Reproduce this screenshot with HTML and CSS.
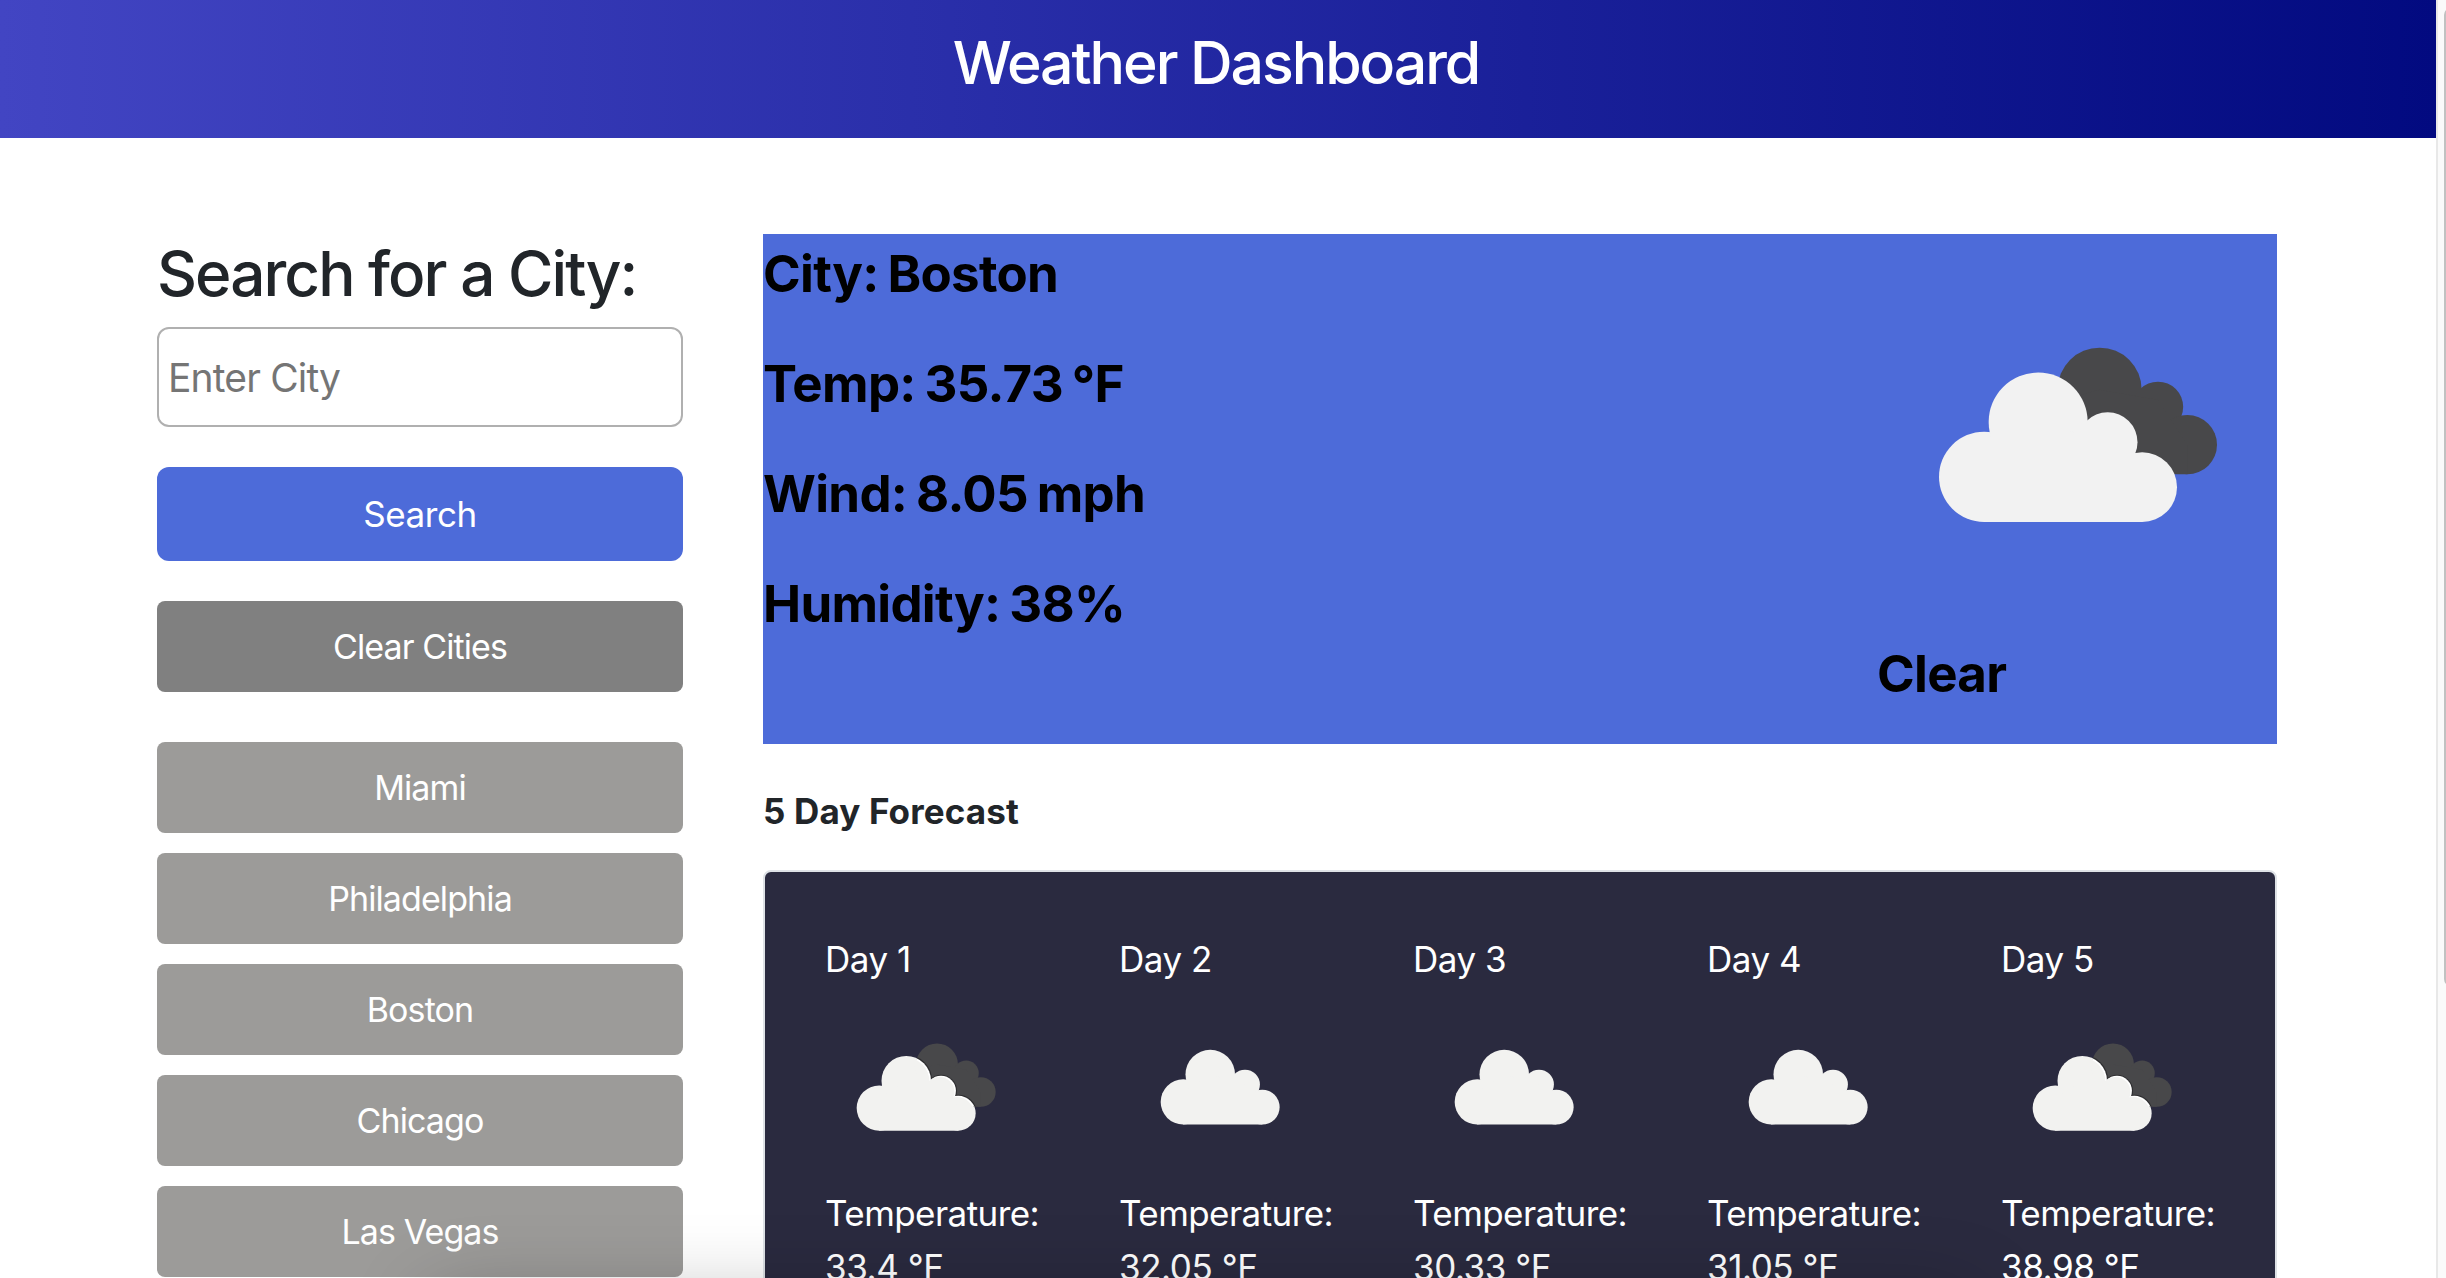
FILE: index.html
```html
<!DOCTYPE html>
<html lang="en">
<head>
<meta charset="utf-8">
<title>Weather Dashboard</title>
<link rel="stylesheet" href="styles.css">
</head>
<body>
<svg class="defs" aria-hidden="true">
  <defs>
    <g id="light-cloud">
      <circle cx="432.5" cy="530.5" r="135.5"/>
      <circle cx="594.5" cy="366" r="148.5"/>
      <circle cx="803" cy="426.500" r="89.500"/>
      <circle cx="906.500" cy="561.500" r="104.500"/>
      <path d="M432 470L595 366L803 426L907 500V666H432z"/>
    </g>
    <g id="dark-cloud">
      <circle cx="779" cy="269" r="126"/>
      <circle cx="954" cy="320.500" r="75.500"/>
      <circle cx="1042" cy="434" r="89"/>
      <path d="M660 300L779 269L954 300L1042 434V523H700z"/>
    </g>
    <clipPath id="dark-clip">
      <circle cx="779" cy="269" r="126"/>
      <circle cx="954" cy="320.500" r="75.500"/>
      <circle cx="1042" cy="434" r="89"/>
      <path d="M660 300L779 269L954 300L1042 434V523H700z"/>
    </clipPath>
    <symbol id="broken-clouds" viewBox="111 -198 1200 1200">
      <use href="#dark-cloud" fill="#48484a"/>
      <use href="#light-cloud" fill="#f2f2f2"/>
    </symbol>
    <symbol id="broken-clouds-small" viewBox="107 -202 1200 1200">
      <use href="#dark-cloud" fill="#48484a"/>
      <use href="#light-cloud" fill="#f2f2f0"/>
      <g clip-path="url(#dark-clip)">
        <use href="#light-cloud" fill="#fff" stroke="#2e2e30" stroke-width="14"/>
        <use href="#light-cloud" fill="#fff"/>
      </g>
      <use href="#light-cloud" fill="#f2f2f0" transform="translate(-9 7)" clip-path="url(#dark-clip)"/>
    </symbol>
    <symbol id="scattered-clouds" viewBox="107 -201 1200 1200">
      <use href="#light-cloud" fill="#f2f2f0" transform="translate(60 -36)"/>
    </symbol>
  </defs>
</svg>

<div class="window">
  <div class="page">
    <header class="header"><h1 class="title">Weather Dashboard</h1></header>
    <div class="content">
      <aside class="sidebar">
        <h2 class="search-title">Search for a City:</h2>
        <input class="city-input" type="text" placeholder="Enter City">
        <button class="btn btn-search">Search</button>
        <button class="btn btn-clear">Clear Cities</button>
        <div class="history">
          <button class="btn">Miami</button>
          <button class="btn">Philadelphia</button>
          <button class="btn">Boston</button>
          <button class="btn">Chicago</button>
          <button class="btn">Las Vegas</button>
        </div>
      </aside>
      <main class="main">
        <section class="current">
          <div class="stats">
            <p class="stat">City: Boston</p>
            <p class="stat">Temp: 35.73 °F</p>
            <p class="stat">Wind: 8.05 mph</p>
            <p class="stat">Humidity: 38%</p>
          </div>
          <div class="condition">
            <svg class="icon-large"><use href="#broken-clouds"/></svg>
            <p class="stat">Clear</p>
          </div>
        </section>
        <h3 class="forecast-title">5 Day Forecast</h3>
        <section class="forecast">
          <div class="day">
            <p class="day-name">Day 1</p>
            <svg class="icon"><use href="#broken-clouds-small"/></svg>
            <p class="label">Temperature:</p><p class="value">33.4 °F</p>
          </div>
          <div class="day">
            <p class="day-name">Day 2</p>
            <svg class="icon"><use href="#scattered-clouds"/></svg>
            <p class="label">Temperature:</p><p class="value">32.05 °F</p>
          </div>
          <div class="day">
            <p class="day-name">Day 3</p>
            <svg class="icon"><use href="#scattered-clouds"/></svg>
            <p class="label">Temperature:</p><p class="value">30.33 °F</p>
          </div>
          <div class="day">
            <p class="day-name">Day 4</p>
            <svg class="icon"><use href="#scattered-clouds"/></svg>
            <p class="label">Temperature:</p><p class="value">31.05 °F</p>
          </div>
          <div class="day">
            <p class="day-name">Day 5</p>
            <svg class="icon"><use href="#broken-clouds-small"/></svg>
            <p class="label">Temperature:</p><p class="value">38.98 °F</p>
          </div>
        </section>
      </main>
    </div>
  </div>
  <div class="scrollbar"><div class="thumb"></div></div>
  <div class="bottom-shadow"></div>
</div>
</body>
</html>
```
FILE: styles.css
```css
* {
  box-sizing: border-box;
  margin: 0;
}

body {
  background: #fff;
  color: #212529;
  font-family: Inter, "Liberation Sans", sans-serif;
  overflow: hidden;
}

.defs {
  position: absolute;
  width: 0;
  height: 0;
}

.window {
  position: relative;
  display: flex;
  height: 100vh;
  overflow: hidden;
}

.page {
  flex: 1;
  overflow: hidden;
}

.header {
  height: 138px;
  padding: 26px 4px 0 0;
  background: linear-gradient(90deg, #4245c3, #020a80);
  color: #fff;
  text-align: center;
}

.title {
  font-size: 59px;
  font-weight: 500;
  line-height: 73px;
  letter-spacing: -2.06px;
}

.content {
  display: grid;
  grid-template-columns: 526px 1514px;
  gap: 80px;
  padding: 96px 0 0 157px;
}

.sidebar {
  display: flex;
  flex-direction: column;
}

.search-title {
  margin-bottom: 14px;
  font-size: 62px;
  font-weight: 500;
  line-height: 79px;
  letter-spacing: -1.94px;
  white-space: nowrap;
}

.city-input {
  height: 100px;
  padding: 0 9px;
  border: 2px solid #b0b0b0;
  border-radius: 12px;
  background: #fff;
  font: 400 39px Inter, "Liberation Sans", sans-serif;
  letter-spacing: -0.85px;
}

.city-input::placeholder {
  color: #757575;
}

.btn {
  flex: none;
  height: 91px;
  padding: 0;
  border: 0;
  border-radius: 8px;
  background: #9c9b99;
  color: #fff;
  font: 400 34px Inter, "Liberation Sans", sans-serif;
  letter-spacing: -0.9px;
}

.btn-search {
  height: 94px;
  margin-top: 40px;
  border-radius: 12px;
  background: #4d6bd9;
  font-size: 35px;
  letter-spacing: -0.45px;
}

.btn-clear {
  margin-top: 40px;
  background: #808080;
}

.history {
  display: flex;
  flex-direction: column;
  gap: 20px;
  margin-top: 50px;
}

.current {
  display: flex;
  justify-content: space-between;
  height: 510px;
  background: #4d6bd9;
  color: #000;
}

.stats {
  display: flex;
  flex-direction: column;
  gap: 31px;
}

.stat {
  font-size: 51px;
  font-weight: 700;
  line-height: 79px;
  letter-spacing: -0.7px;
  word-spacing: -2.5px;
}

.icon-large {
  display: block;
  width: 400px;
  height: 400px;
}

.forecast-title {
  margin: 40px 0 32px;
  font-size: 35px;
  font-weight: 700;
  line-height: 54px;
  letter-spacing: 0.15px;
}

.forecast {
  display: grid;
  grid-template-columns: repeat(4, 294px) 1fr;
  height: 800px;
  padding: 60px;
  border: 2px solid #dee2e6;
  border-radius: 8px;
  background: #2a2a3f;
  color: #fff;
  font-size: 35px;
  line-height: 54px;
}

.day-name,
.value {
  letter-spacing: -0.45px;
}

.label {
  letter-spacing: -0.56px;
}

.icon {
  display: block;
  width: 200px;
  height: 200px;
}

.scrollbar {
  width: 10px;
  padding: 8px 0 0 6px;
  border-left: 2px solid #e8e8e8;
  background: #fafafa;
  overflow: hidden;
}

.thumb {
  width: 14px;
  height: 978px;
  border-radius: 7px;
  background: #c1c1c1;
}

/* soft shade cast over the bottom edge of the window */
.bottom-shadow {
  position: absolute;
  top: calc(100% + 20px);
  left: 430px;
  right: 470px;
  height: 200px;
  border-radius: 20px;
  box-shadow: 0 0 80px rgba(0, 0, 0, 0.27);
  pointer-events: none;
}
```
